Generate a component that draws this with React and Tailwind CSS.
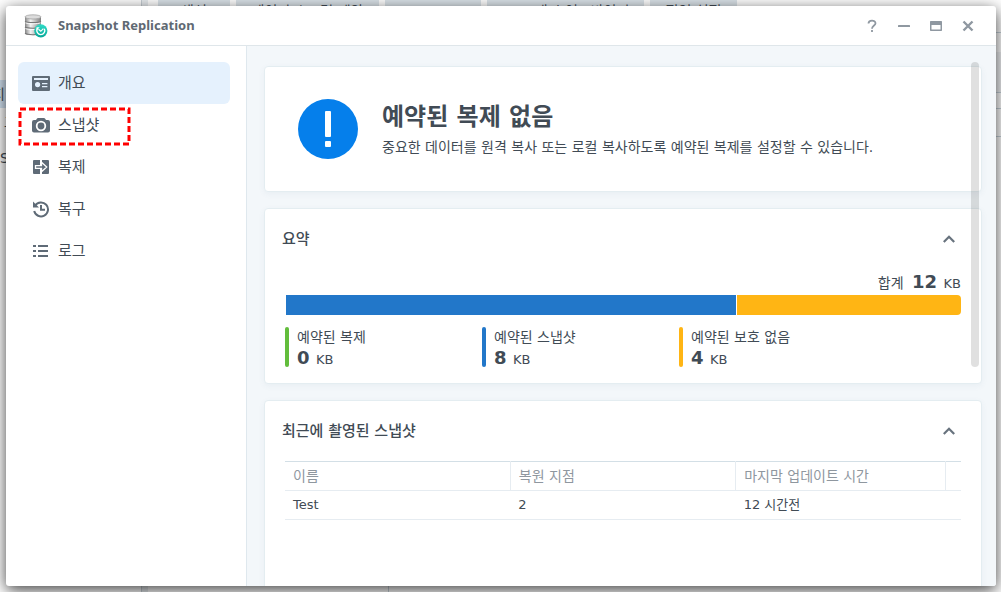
import React from "react";

const NAV = [
  { label: "개요", icon: "overview", active: true },
  { label: "스냅샷", icon: "camera", marked: true },
  { label: "복제", icon: "replicate" },
  { label: "복구", icon: "history" },
  { label: "로그", icon: "list" },
];

function NavIcon({ name }) {
  const c = "size-[18px] shrink-0 text-[#5f6b77]";
  switch (name) {
    case "overview":
      return (
        <svg viewBox="0 0 18 18" className={c} aria-hidden="true">
          <path
            fill="currentColor"
            fillRule="evenodd"
            d="M1 2h16a1 1 0 0 1 1 1v13a1 1 0 0 1-1 1H1a1 1 0 0 1-1-1V3a1 1 0 0 1 1-1ZM2 4v2h14V4ZM5.600 8a2.600 2.600 0 1 0 0 5.200 2.600 2.600 0 0 0 0-5.200ZM10 9v1.300h5.400V9ZM10 12v1.300h5.400V12Z"
          />
        </svg>
      );
    case "camera":
      return (
        <svg viewBox="0 0 18 18" className={c} aria-hidden="true">
          <path
            fill="currentColor"
            d="M6 2h6q.6 0 1 .6L14 4h2a2 2 0 0 1 2 2v8.500a2 2 0 0 1-2 2H2a2 2 0 0 1-2-2V6a2 2 0 0 1 2-2h2l1-1.400Q5.400 2 6 2Z"
          />
          <circle cx="9" cy="10" r="4.300" fill="none" stroke="#fff" strokeWidth="1.800" />
        </svg>
      );
    case "replicate":
      return (
        <svg viewBox="0 0 18 18" className={c} aria-hidden="true">
          <path fill="currentColor" d="M2 2h6v14H2a1 1 0 0 1-1-1V3a1 1 0 0 1 1-1ZM10 2h6a1 1 0 0 1 1 1v12a1 1 0 0 1-1 1h-6Z" />
          <path
            fill="currentColor"
            stroke="#fff"
            strokeWidth="1.300"
            d="M3.500 7.600h6V4.300L14.700 9l-5.200 4.700v-3.300h-6Z"
          />
        </svg>
      );
    case "history":
      return (
        <svg viewBox="0 0 18 18" className={c} fill="none" stroke="currentColor" strokeWidth="2" aria-hidden="true">
          <path d="M3.200 5.500A7 7 0 1 1 2.200 11" />
          <path d="M9 5v4.800h4" />
          <path d="M1 1.500v6h6Z" fill="currentColor" stroke="none" />
        </svg>
      );
    default:
      return (
        <svg viewBox="0 0 18 18" className={c} fill="currentColor" aria-hidden="true">
          <path d="M1 3h3v2H1ZM6 3h10v2H6ZM1 8h3v2H1ZM6 8h10v2H6ZM1 13h3v2H1ZM6 13h10v2H6Z" />
        </svg>
      );
  }
}

function AppLogo() {
  return (
    <svg viewBox="0 0 24 24" className="size-6 shrink-0" aria-hidden="true">
      <defs>
        <linearGradient id="disk" x1="0" x2="1">
          <stop offset="0" stopColor="#858585" />
          <stop offset=".35" stopColor="#f2f2f2" />
          <stop offset=".65" stopColor="#bdbdbd" />
          <stop offset="1" stopColor="#808080" />
        </linearGradient>
        <linearGradient id="badge" x1="0" x2="0" y1="0" y2="1">
          <stop offset="0" stopColor="#2fdcc8" />
          <stop offset="1" stopColor="#08a898" />
        </linearGradient>
      </defs>
      <path d="M1 3v16.500c0 2.500 16 2.500 16 0V3Z" fill="url(#disk)" />
      <path d="M1 7.300c2 1.700 14 1.700 16 0M1 13c2 1.700 14 1.700 16 0M1 19.200c2 2 14 2 16 0" fill="none" stroke="#777" strokeWidth="1.100" />
      <path d="M1.500 8.900c3 1.200 12 1.200 15 0M1.500 14.600c3 1.200 12 1.200 15 0" fill="none" stroke="#fff" strokeWidth=".9" />
      <ellipse cx="9" cy="2.900" rx="8" ry="2.100" fill="#dcdcdc" stroke="#999" strokeWidth=".7" />
      <circle cx="16.800" cy="16.800" r="6.600" fill="url(#badge)" />
      <path d="M13.200 14.800a4 4 0 1 0 7.200 0" fill="none" stroke="#fff" strokeWidth="1.300" />
      <path d="M12.500 16.500v-3.200h3.200Z" fill="#fff" />
      <path d="m14.500 15.300 2.300 2 2.600-2.600" fill="none" stroke="#fff" strokeWidth="1.200" />
    </svg>
  );
}

function Backdrop() {
  return (
    <div className="absolute inset-0 overflow-hidden bg-white text-[14px] text-[#414b55]" aria-hidden="true">
      <div className="flex h-full">
        <div className="w-[142px] shrink-0 border-r border-[#c8d0d6] pt-20">
          <div className="-ml-2 h-7 bg-[#d4e4f3] leading-7">지</div>
          <div className="h-9 pl-1 leading-7">고</div>
          <div className="leading-7">S</div>
        </div>
        <div className="w-[6px] shrink-0 bg-[#e8ecef]" />
        <div className="min-w-0 flex-1 pl-[10px]">
          <div className="flex gap-[6px]">
            <span className="h-6 w-[72px] bg-[#dce4ea] text-center leading-[22px]">생성</span>
            <span className="h-6 w-[143px] bg-[#dce4ea] text-center leading-[22px]">데이터 스크럽 예약</span>
            <span className="h-6 w-24 bg-[#dce4ea]" />
            <span className="h-6 w-[157px] bg-[#dce4ea] text-center leading-[22px]">SSD 캐시 어드바이저</span>
            <span className="h-6 w-[87px] bg-[#dce4ea] text-center leading-[22px]">전역 설정</span>
          </div>
          <div className="mt-2 h-5 border-t border-[#c8d4dc]" />
          <div className="h-10 bg-[#f1f3f5]" />
          <div className="h-[17px] border-y border-[#c8d4dc]" />
          <div className="h-7 border-b border-[#c8d4dc]" />
          <div className="h-full w-[231px] border-r border-[#c8d4dc]" />
        </div>
      </div>
    </div>
  );
}

function TitleBar() {
  const btn = "flex size-8 items-center justify-center text-[#8f98a1]";
  return (
    <header className="flex h-10 shrink-0 items-center justify-between border-b border-[#dfe6ea] pr-3 pl-[18px]">
      <div className="flex items-center gap-[10px]">
        <AppLogo />
        <h1 className="text-[13px] font-bold text-[#5f6973] font-['Noto_Sans','Noto_Sans_CJK_KR',sans-serif]">Snapshot Replication</h1>
      </div>
      <div className="flex">
        <button type="button" aria-label="도움말" className={btn}>
          <svg viewBox="0 0 12 14" className="h-[14px] w-3" fill="none" stroke="currentColor" strokeWidth="1.800">
            <path d="M2.500 4.500C2.500 .6 9.500 .6 9.500 4.200 9.500 6.500 6 6.500 6 9.800" />
            <path d="M6 11v2" />
          </svg>
        </button>
        <button type="button" aria-label="최소화" className={btn}>
          <svg viewBox="0 0 12 12" className="size-3" fill="currentColor"><rect y="5" width="12" height="2" rx=".5" /></svg>
        </button>
        <button type="button" aria-label="최대화" className={btn}>
          <svg viewBox="0 0 12 12" className="size-3" fill="currentColor">
            <path fillRule="evenodd" d="M.7 1h10.600q.7 0 .7.700v8.600q0 .7-.7.700H.7q-.7 0-.7-.7V1.700Q0 1 .7 1ZM1.500 5v4.600h9V5Z" />
          </svg>
        </button>
        <button type="button" aria-label="닫기" className={btn}>
          <svg viewBox="0 0 12 12" className="size-3" stroke="currentColor" strokeWidth="2.400"><path d="m1.500 1.500 9 9M10.500 1.500l-9 9" /></svg>
        </button>
      </div>
    </header>
  );
}

function Sidebar() {
  return (
    <nav className="w-[241px] shrink-0 border-r border-[#dfe8ee] py-4 pr-4 pl-3">
      <ul>
        {NAV.map((item) => (
          <li key={item.label} className="relative">
            <a
              href="#"
              aria-current={item.active ? "page" : undefined}
              className={
                "flex h-[42px] items-center gap-2 rounded-md pl-[14px] text-[15px] " + (item.active ? "bg-[#e5f1fd]" : "")
              }
            >
              <NavIcon name={item.icon} />
              {item.label}
            </a>
            {item.marked && (
              <svg className="pointer-events-none absolute top-[3px] left-0 h-[39px] w-[113px]" aria-hidden="true">
                <rect x="2" y="2" width="109" height="35" fill="none" stroke="#f00" strokeWidth="3" strokeDasharray="6 3" />
              </svg>
            )}
          </li>
        ))}
      </ul>
    </nav>
  );
}

function SectionHeader({ title }) {
  return (
    <div className="flex items-center justify-between pr-[9px]">
      <h2 className="text-[15px] leading-5 font-medium">{title}</h2>
      <button type="button" aria-label={title + " 접기"} className="text-[#68737e]">
        <svg viewBox="0 0 12 8" className="h-2 w-3" fill="none" stroke="currentColor" strokeWidth="2.200">
          <path d="m.8 7 5.200-5.200L11.200 7" />
        </svg>
      </button>
    </div>
  );
}

const CARD = "shrink-0 rounded-[4px] border border-[#e4edf1] bg-white shadow-[0_2px_6px_rgba(60,100,130,0.06)]";

function Amount({ value }) {
  return (
    <>
      <strong className="text-[18px] font-bold">{value}</strong> <span className="ml-[2px] text-[13px]">KB</span>
    </>
  );
}

function Legend({ color, label, value }) {
  return (
    <div className="flex h-10 w-[197px] gap-2">
      <span className={"w-1 rounded-[2px] " + color} />
      <div>
        <div className="leading-5">{label}</div>
        <div className="leading-[22px]">
          <Amount value={value} />
        </div>
      </div>
    </div>
  );
}

export default function App() {
  return (
    <div className="relative h-screen overflow-hidden text-[14px] text-[#414b55] font-['DejaVu_Sans','Noto_Sans_CJK_KR',sans-serif]">
      <Backdrop />
      <div className="relative flex h-full pt-[6px] pr-[5px] pb-[6px] pl-[6px]">
        <div className="flex min-w-0 flex-1 flex-col overflow-hidden rounded-[3px] bg-white shadow-[0_4px_16px_rgba(0,0,0,0.75)]">
          <TitleBar />
          <div className="flex min-h-0 flex-1">
            <Sidebar />
            <main className="relative flex min-w-0 flex-1 flex-col gap-4 overflow-hidden bg-[#f3f7fa] pt-5 pr-[14px] pl-[17px]">
              <section className={CARD + " flex h-[126px] items-center gap-6 pl-[33px]"}>
                <svg viewBox="0 0 60 60" className="size-[60px] shrink-0" aria-hidden="true">
                  <circle cx="30" cy="30" r="30" fill="#057feb" />
                  <rect x="27" y="12" width="6" height="26" rx="1" fill="#fff" />
                  <rect x="27" y="42" width="6" height="6" rx="1" fill="#fff" />
                </svg>
                <div className="pt-1">
                  <h2 className="text-[24px] leading-8 font-bold">예약된 복제 없음</h2>
                  <p className="leading-7">중요한 데이터를 원격 복사 또는 로컬 복사하도록 예약된 복제를 설정할 수 있습니다.</p>
                </div>
              </section>
              <section className={CARD + " h-44 px-[17px] pt-5"}>
                <SectionHeader title="요약" />
                <div className="pr-[3px] pl-1">
                  <div className="mt-[22px] text-right leading-[22px]">
                    합계 <span className="ml-1"><Amount value="12" /></span>
                  </div>
                  <div className="flex h-5 gap-px">
                    <div className="w-2/3 bg-[#2277c9]" />
                    <div className="flex-1 rounded-r-[4px] bg-[#ffb514]" />
                  </div>
                </div>
                <div className="mt-3 flex pl-[3px]">
                  <Legend color="bg-[#62bd3c]" label="예약된 복제" value="0" />
                  <Legend color="bg-[#2277c9]" label="예약된 스냅샷" value="8" />
                  <Legend color="bg-[#ffb514]" label="예약된 보호 없음" value="4" />
                </div>
              </section>
              <section className={CARD + " h-60 px-[17px] pt-5"}>
                <SectionHeader title="최근에 촬영된 스냅샷" />
                <div className="mt-5 px-[3px]">
                  <table className="w-full table-fixed border-collapse text-left">
                    <thead>
                      <tr className="h-[29px] border-t border-b border-t-[#d3dfe6] border-b-[#e6ecf1] text-[#8f979f]">
                        <th className="w-1/3 border-r border-[#e6ecf1] pl-2 font-normal">이름</th>
                        <th className="w-1/3 border-r border-[#e6ecf1] pl-2 font-normal">복원 지점</th>
                        <th className="border-r border-[#e6ecf1] pl-2 font-normal">마지막 업데이트 시간</th>
                        <th className="w-4" />
                      </tr>
                    </thead>
                    <tbody>
                      <tr className="h-[29px] border-b border-[#e6ecf1] text-[13px]">
                        <td className="pl-2">Test</td>
                        <td className="pl-2">2</td>
                        <td className="pl-2">12 시간전</td>
                        <td />
                      </tr>
                    </tbody>
                  </table>
                </div>
              </section>
              <div className="absolute top-4 right-[17px] h-[305px] w-2 rounded-full bg-black/12" />
            </main>
          </div>
        </div>
      </div>
    </div>
  );
}
